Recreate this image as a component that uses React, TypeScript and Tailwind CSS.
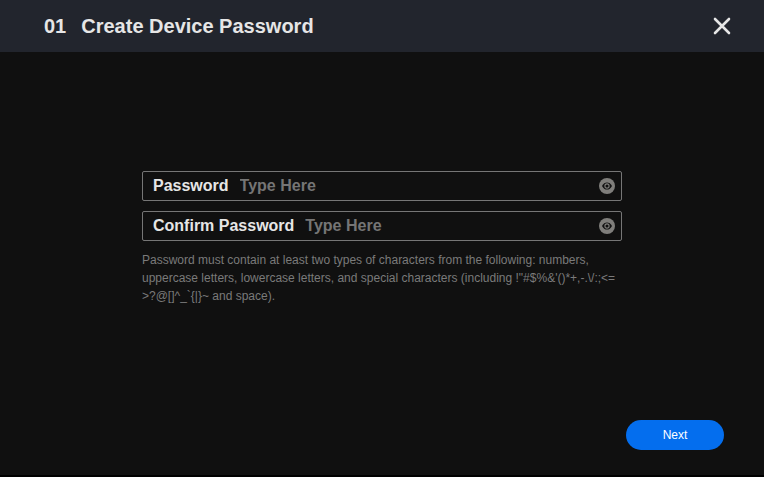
import { useState } from 'react';
import type { FormEvent } from 'react';

interface IPasswordField {
  id: string;
  label: string;
  value: string;
  onChange: (value: string) => void;
}

//zero-width space lets the symbol list wrap after "<="
const passwordRule =
  'Password must contain at least two types of characters from the following: ' +
  'numbers, uppercase letters, lowercase letters, and special characters ' +
  '(including !"#$%&\'()*+,-.\\/:;<=\u200b>?@[]^_`{|}~ and space).';

//round eye icon shown at the end of a password box
const EyeIcon = () => (
  <svg className="w-4 h-4" viewBox="0 0 16 16" fill="none" aria-hidden="true">
    <circle cx="8" cy="8" r="8" fill="#7f7e7b" />
    <path
      d="M3 8C4.2 5.5 6 4.4 8 4.4s3.8 1.1 5 3.6c-1.2 2.5-3 3.6-5 3.6S4.2 10.5 3 8z"
      fill="#111111"
    />
    <circle cx="8" cy="8" r="2.1" stroke="#7f7e7b" strokeWidth="1.1" />
  </svg>
);

const PasswordField = ({ id, label, value, onChange }: IPasswordField) => {
  const [visible, setVisible] = useState<boolean>(false);

  return (
    <div className="flex items-center h-[30px] rounded-xs border border-[#767676] pl-[10px] pr-1.5 text-base font-bold">
      <label htmlFor={id} className="shrink-0 text-[#e6e6e6]">
        {label}
      </label>
      <input
        id={id}
        type={visible ? 'text' : 'password'}
        value={value}
        placeholder="Type Here"
        onChange={(e) => onChange(e.target.value)}
        className="flex-1 min-w-0 ml-[11px] bg-transparent text-[#e6e6e6] placeholder:text-[#757575] focus:outline-none"
      />
      <button
        type="button"
        aria-label="Show password"
        onClick={() => setVisible(!visible)}
        className="shrink-0"
      >
        <EyeIcon />
      </button>
    </div>
  );
};

const App = () => {
  const [password, setPassword] = useState<string>('');
  const [confirm, setConfirm] = useState<string>('');

  const submit = (e: FormEvent) => {
    e.preventDefault();
  };

  return (
    <div className="flex flex-col min-h-screen bg-[#101010] border-b-2 border-black font-['Liberation_Sans',Arial,sans-serif]">
      <header className="flex items-center h-[52px] shrink-0 bg-[#22252d] pl-11 pr-8 text-[#e6e6e6]">
        <h1 className="flex flex-1 gap-[15px] text-xl font-bold">
          <span>01</span>
          <span>Create Device Password</span>
        </h1>
        <button type="button" aria-label="Close">
          <svg
            className="w-5 h-5"
            viewBox="0 0 20 20"
            fill="none"
            stroke="currentColor"
            strokeWidth="2.6"
            strokeLinecap="round"
          >
            <path d="M3 3l14 14M17 3L3 17" />
          </svg>
        </button>
      </header>

      <form onSubmit={submit} className="flex flex-col flex-1">
        <div className="flex flex-col flex-1 gap-[10px] w-full max-w-[480px] mx-auto pt-[119px]">
          <PasswordField
            id="password"
            label="Password"
            value={password}
            onChange={setPassword}
          />
          <PasswordField
            id="confirm"
            label="Confirm Password"
            value={confirm}
            onChange={setConfirm}
          />
          <p className="text-xs leading-[18px] text-[#7a7a7a]">{passwordRule}</p>
        </div>

        <div className="flex justify-end px-10 pb-[25px]">
          <button
            type="submit"
            className="w-[98px] h-[30px] rounded-full bg-[#046eee] text-xs text-white"
          >
            Next
          </button>
        </div>
      </form>
    </div>
  );
};

export default App;
